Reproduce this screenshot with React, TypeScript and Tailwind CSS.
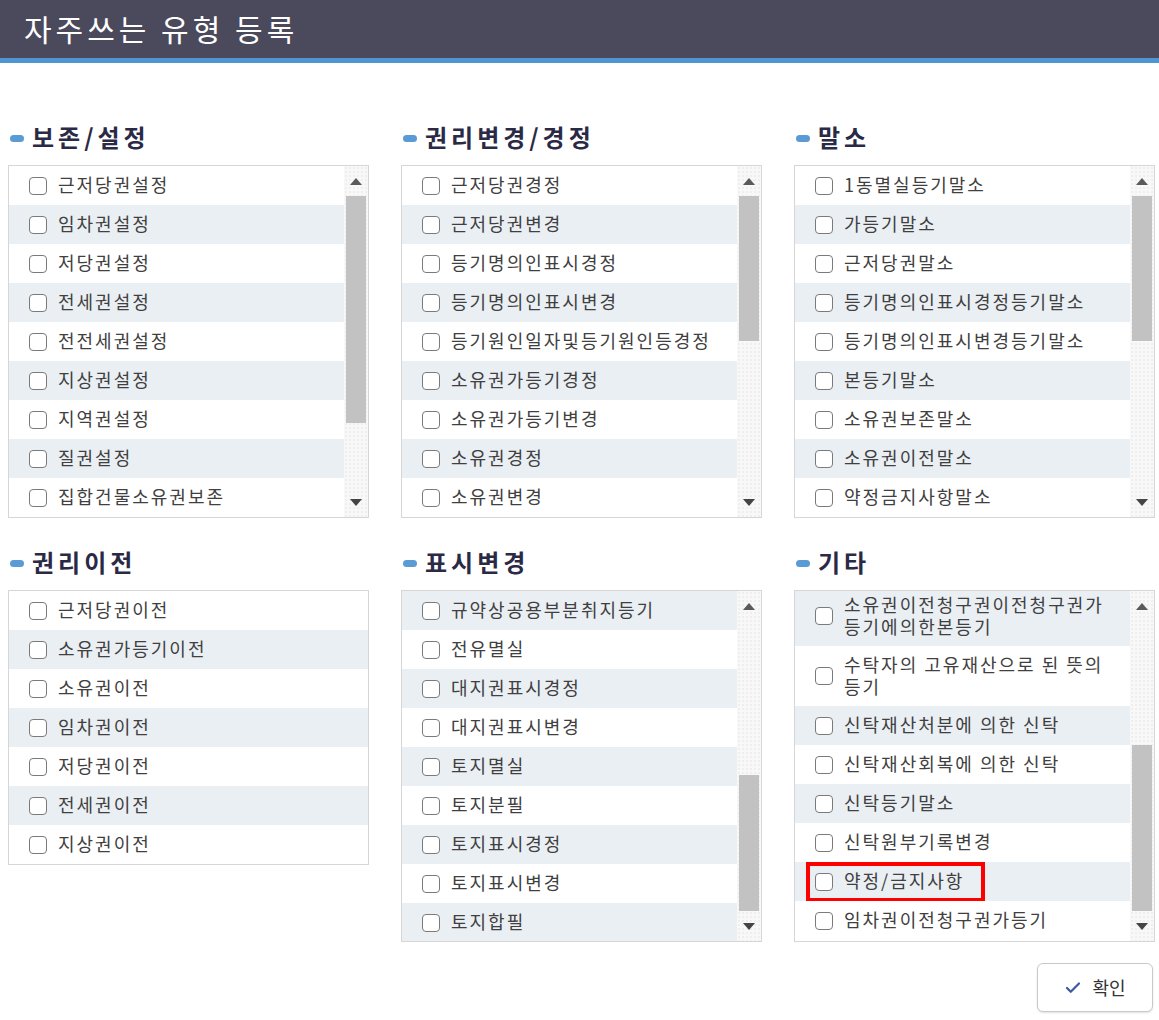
import { Check } from 'lucide-react';

type Item = { label: string; tall?: boolean };

type Section = {
    title: string;
    items: Item[];
    scroll?: { top: number; height: number };
    offset?: boolean;
    height?: string;
};

const top: Section[] = [
    {
        title: '보존/설정',
        items: ['근저당권설정', '임차권설정', '저당권설정', '전세권설정', '전전세권설정', '지상권설정', '지역권설정', '질권설정', '집합건물소유권보존'].map((label) => ({ label })),
        scroll: { top: 0, height: 227 },
    },
    {
        title: '권리변경/경정',
        items: ['근저당권경정', '근저당권변경', '등기명의인표시경정', '등기명의인표시변경', '등기원인일자및등기원인등경정', '소유권가등기경정', '소유권가등기변경', '소유권경정', '소유권변경'].map((label) => ({ label })),
        scroll: { top: 0, height: 145 },
    },
    {
        title: '말소',
        items: ['1동멸실등기말소', '가등기말소', '근저당권말소', '등기명의인표시경정등기말소', '등기명의인표시변경등기말소', '본등기말소', '소유권보존말소', '소유권이전말소', '약정금지사항말소'].map((label) => ({ label })),
        scroll: { top: 0, height: 145 },
    },
];

const bottom: Section[] = [
    {
        title: '권리이전',
        items: ['근저당권이전', '소유권가등기이전', '소유권이전', '임차권이전', '저당권이전', '전세권이전', '지상권이전'].map((label) => ({ label })),
    },
    {
        title: '표시변경',
        items: ['규약상공용부분취지등기', '전유멸실', '대지권표시경정', '대지권표시변경', '토지멸실', '토지분필', '토지표시경정', '토지표시변경', '토지합필'].map((label) => ({ label })),
        scroll: { top: 154, height: 136 },
        height: 'h-[352px]',
    },
    {
        title: '기타',
        items: [
            { label: '소유권이전청구권이전청구권가\n등기에의한본등기', tall: true },
            { label: '수탁자의 고유재산으로 된 뜻의\n등기', tall: true },
            { label: '신탁재산처분에 의한 신탁' },
            { label: '신탁재산회복에 의한 신탁' },
            { label: '신탁등기말소' },
            { label: '신탁원부기록변경' },
            { label: '약정/금지사항' },
            { label: '임차권이전청구권가등기' },
        ],
        scroll: { top: 124, height: 166 },
        offset: true,
        height: 'h-[352px]',
    },
];

function Box() {
    return <span className="w-[18px] h-[18px] shrink-0 rounded-[4px] border-[1.5px] border-[#7a7a7a] bg-white" />;
}

function Scrollbar({ top, height }: { top: number; height: number }) {
    return (
        <div className="w-[24px] shrink-0 flex flex-col bg-[#f8f8f8] bg-[radial-gradient(#e4e4e4_0.6px,transparent_0.8px)] bg-[length:4px_4px]">
            <div className="h-[30px] flex items-center justify-center">
                <span className="w-0 h-0 border-x-[6px] border-x-transparent border-b-[7px] border-b-[#5a5a5a]" />
            </div>
            <div className="flex-1 px-[2px]">
                <div className="bg-[#c2c2c2]" style={{ marginTop: top, height }} />
            </div>
            <div className="h-[30px] flex items-center justify-center">
                <span className="w-0 h-0 border-x-[6px] border-x-transparent border-t-[7px] border-t-[#444]" />
            </div>
        </div>
    );
}

function Panel({ section }: { section: Section }) {
    return (
        <div>
            <h2 className="flex items-center gap-[8px] h-[30px] mb-[12px] pb-[3px] text-[24px] font-bold text-[#2b2a46] tracking-[4px]">
                <span className="ml-[2px] mt-[3px] w-[14px] h-[7px] rounded-full bg-[#5b9bd5]" />
                {section.title}
            </h2>
            <div className={`flex border border-[#d6d6d6] overflow-hidden ${section.height ?? ''}`}>
                <ul className={`flex-1 ${section.offset ? '-mt-[5px]' : ''}`}>
                    {section.items.map((item, i) => (
                        <li
                            key={item.label}
                            className={`relative flex items-center gap-[11px] pl-[20px] ${item.tall ? 'h-[60px]' : 'h-[39px]'} ${i % 2 === (section.offset || section.scroll?.top ? 0 : 1) ? 'bg-[#eaeff4]' : 'bg-white'}`}
                        >
                            <Box />
                            <span className="whitespace-pre-line pb-[3px] text-[18px] leading-[22px] tracking-[2px] text-[#404040]">{item.label}</span>
                            {item.label === '약정/금지사항' && (
                                <span className="absolute left-[11px] top-0 w-[179px] h-[40px] border-[4px] border-[#ff0000]" />
                            )}
                        </li>
                    ))}
                </ul>
                {section.scroll && <Scrollbar top={section.scroll.top} height={section.scroll.height} />}
            </div>
        </div>
    );
}

export default function App() {
    return (
        <div className="w-[1159px] h-[1020px] bg-white font-['Noto_Sans_CJK_KR',sans-serif]">
            <header className="h-[58px] bg-[#4b4a5c] flex items-center pl-[24px]">
                <h1 className="text-[30px] text-white tracking-[4px] pb-[2px]">자주쓰는 유형 등록</h1>
            </header>
            <div className="h-[5px] bg-[#4f96d0]" />
            <main className="pl-[8px] pr-[4px] pt-[60px]">
                <div className="grid grid-cols-[361px_361px_361px] gap-x-[32px]">
                    {top.map((s) => (
                        <Panel key={s.title} section={s} />
                    ))}
                </div>
                <div className="grid grid-cols-[361px_361px_361px] gap-x-[32px] mt-[30px]">
                    {bottom.map((s) => (
                        <Panel key={s.title} section={s} />
                    ))}
                </div>
                <div className="flex justify-end mt-[21px] pr-[2px]">
                    <button className="w-[116px] h-[49px] flex items-center justify-center gap-[10px] rounded-[6px] border border-[#c9c9c9] bg-white shadow-[0_1px_2px_rgba(0,0,0,0.12)] text-[18px] text-[#333]">
                        <Check className="w-[18px] h-[18px] text-[#3d5ba3]" strokeWidth={3} />
                        확인
                    </button>
                </div>
            </main>
        </div>
    );
}
